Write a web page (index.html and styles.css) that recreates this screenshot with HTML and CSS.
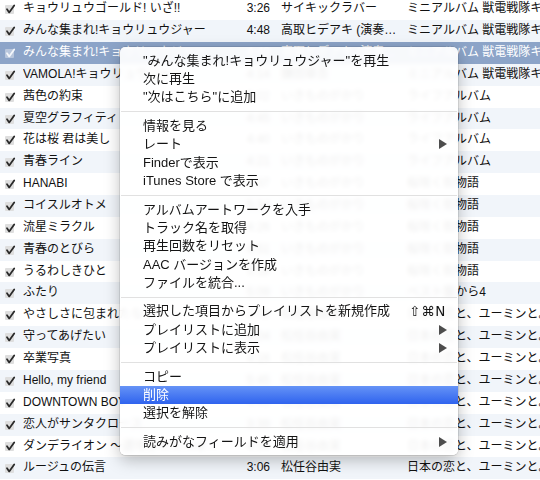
FILE: index.html
```html
<!DOCTYPE html>
<html lang="ja">
<head>
<meta charset="utf-8">
<link rel="stylesheet" href="styles.css">
</head>
<body>
<div class="list">
  <div class="row"><span class="chk"><svg viewBox="0 0 12 12"><rect x="1" y="2" width="9" height="9" rx="1" class="box"/><path d="M3 6.3 L5.2 9.4 L10.2 2.4" class="tick"/></svg></span><span class="title">キョウリュウゴールド! いざ!!</span><span class="time">3:26</span><span class="artist">サイキックラバー</span><span class="album">ミニアルバム 獣電戦隊キョウリュウジャー</span></div>
  <div class="row"><span class="chk"><svg viewBox="0 0 12 12"><rect x="1" y="2" width="9" height="9" rx="1" class="box"/><path d="M3 6.3 L5.2 9.4 L10.2 2.4" class="tick"/></svg></span><span class="title">みんな集まれ!キョウリュウジャー</span><span class="time">4:48</span><span class="artist">高取ヒデアキ (演奏: Project.R)</span><span class="album">ミニアルバム 獣電戦隊キョウリュウジャー</span></div>
  <div class="row sel"><span class="chk"><svg viewBox="0 0 12 12"><rect x="1" y="2" width="9" height="9" rx="1" class="box"/><path d="M3 6.3 L5.2 9.4 L10.2 2.4" class="tick"/></svg></span><span class="title">みんな集まれ!キョウリュウジャー</span><span class="time">4:49</span><span class="artist">高取ヒデアキ (演奏: Project.R)</span><span class="album">ミニアルバム 獣電戦隊キョウリュウジャー</span></div>
  <div class="row"><span class="chk"><svg viewBox="0 0 12 12"><rect x="1" y="2" width="9" height="9" rx="1" class="box"/><path d="M3 6.3 L5.2 9.4 L10.2 2.4" class="tick"/></svg></span><span class="title">VAMOLA!キョウリュウジャー</span><span class="time">4:14</span><span class="artist">鎌田章吾</span><span class="album">ミニアルバム 獣電戦隊キョウリュウジャー</span></div>
  <div class="row"><span class="chk"><svg viewBox="0 0 12 12"><rect x="1" y="2" width="9" height="9" rx="1" class="box"/><path d="M3 6.3 L5.2 9.4 L10.2 2.4" class="tick"/></svg></span><span class="title">茜色の約束</span><span class="time">5:02</span><span class="artist">いきものがかり</span><span class="album">ライフアルバム</span></div>
  <div class="row"><span class="chk"><svg viewBox="0 0 12 12"><rect x="1" y="2" width="9" height="9" rx="1" class="box"/><path d="M3 6.3 L5.2 9.4 L10.2 2.4" class="tick"/></svg></span><span class="title">夏空グラフィティ</span><span class="time">4:45</span><span class="artist">いきものがかり</span><span class="album">ライフアルバム</span></div>
  <div class="row"><span class="chk"><svg viewBox="0 0 12 12"><rect x="1" y="2" width="9" height="9" rx="1" class="box"/><path d="M3 6.3 L5.2 9.4 L10.2 2.4" class="tick"/></svg></span><span class="title">花は桜 君は美し</span><span class="time">4:40</span><span class="artist">いきものがかり</span><span class="album">ライフアルバム</span></div>
  <div class="row"><span class="chk"><svg viewBox="0 0 12 12"><rect x="1" y="2" width="9" height="9" rx="1" class="box"/><path d="M3 6.3 L5.2 9.4 L10.2 2.4" class="tick"/></svg></span><span class="title">青春ライン</span><span class="time">4:21</span><span class="artist">いきものがかり</span><span class="album">ライフアルバム</span></div>
  <div class="row"><span class="chk"><svg viewBox="0 0 12 12"><rect x="1" y="2" width="9" height="9" rx="1" class="box"/><path d="M3 6.3 L5.2 9.4 L10.2 2.4" class="tick"/></svg></span><span class="title">HANABI</span><span class="time">4:37</span><span class="artist">いきものがかり</span><span class="album">桜咲く街物語</span></div>
  <div class="row"><span class="chk"><svg viewBox="0 0 12 12"><rect x="1" y="2" width="9" height="9" rx="1" class="box"/><path d="M3 6.3 L5.2 9.4 L10.2 2.4" class="tick"/></svg></span><span class="title">コイスルオトメ</span><span class="time">5:34</span><span class="artist">いきものがかり</span><span class="album">桜咲く街物語</span></div>
  <div class="row"><span class="chk"><svg viewBox="0 0 12 12"><rect x="1" y="2" width="9" height="9" rx="1" class="box"/><path d="M3 6.3 L5.2 9.4 L10.2 2.4" class="tick"/></svg></span><span class="title">流星ミラクル</span><span class="time">4:26</span><span class="artist">いきものがかり</span><span class="album">桜咲く街物語</span></div>
  <div class="row"><span class="chk"><svg viewBox="0 0 12 12"><rect x="1" y="2" width="9" height="9" rx="1" class="box"/><path d="M3 6.3 L5.2 9.4 L10.2 2.4" class="tick"/></svg></span><span class="title">青春のとびら</span><span class="time">4:51</span><span class="artist">いきものがかり</span><span class="album">桜咲く街物語</span></div>
  <div class="row"><span class="chk"><svg viewBox="0 0 12 12"><rect x="1" y="2" width="9" height="9" rx="1" class="box"/><path d="M3 6.3 L5.2 9.4 L10.2 2.4" class="tick"/></svg></span><span class="title">うるわしきひと</span><span class="time">5:18</span><span class="artist">いきものがかり</span><span class="album">桜咲く街物語</span></div>
  <div class="row"><span class="chk"><svg viewBox="0 0 12 12"><rect x="1" y="2" width="9" height="9" rx="1" class="box"/><path d="M3 6.3 L5.2 9.4 L10.2 2.4" class="tick"/></svg></span><span class="title">ふたり</span><span class="time">5:09</span><span class="artist">いきものがかり</span><span class="album">ベスト盤から4</span></div>
  <div class="row"><span class="chk"><svg viewBox="0 0 12 12"><rect x="1" y="2" width="9" height="9" rx="1" class="box"/><path d="M3 6.3 L5.2 9.4 L10.2 2.4" class="tick"/></svg></span><span class="title">やさしさに包まれたなら</span><span class="time">3:02</span><span class="artist">松任谷由実</span><span class="album">日本の恋と、ユーミンと。</span></div>
  <div class="row"><span class="chk"><svg viewBox="0 0 12 12"><rect x="1" y="2" width="9" height="9" rx="1" class="box"/><path d="M3 6.3 L5.2 9.4 L10.2 2.4" class="tick"/></svg></span><span class="title">守ってあげたい</span><span class="time">4:04</span><span class="artist">松任谷由実</span><span class="album">日本の恋と、ユーミンと。</span></div>
  <div class="row"><span class="chk"><svg viewBox="0 0 12 12"><rect x="1" y="2" width="9" height="9" rx="1" class="box"/><path d="M3 6.3 L5.2 9.4 L10.2 2.4" class="tick"/></svg></span><span class="title">卒業写真</span><span class="time">4:16</span><span class="artist">松任谷由実</span><span class="album">日本の恋と、ユーミンと。</span></div>
  <div class="row"><span class="chk"><svg viewBox="0 0 12 12"><rect x="1" y="2" width="9" height="9" rx="1" class="box"/><path d="M3 6.3 L5.2 9.4 L10.2 2.4" class="tick"/></svg></span><span class="title">Hello, my friend</span><span class="time">5:45</span><span class="artist">松任谷由実</span><span class="album">日本の恋と、ユーミンと。</span></div>
  <div class="row"><span class="chk"><svg viewBox="0 0 12 12"><rect x="1" y="2" width="9" height="9" rx="1" class="box"/><path d="M3 6.3 L5.2 9.4 L10.2 2.4" class="tick"/></svg></span><span class="title">DOWNTOWN BOY</span><span class="time">4:43</span><span class="artist">松任谷由実</span><span class="album">日本の恋と、ユーミンと。</span></div>
  <div class="row"><span class="chk"><svg viewBox="0 0 12 12"><rect x="1" y="2" width="9" height="9" rx="1" class="box"/><path d="M3 6.3 L5.2 9.4 L10.2 2.4" class="tick"/></svg></span><span class="title">恋人がサンタクロース</span><span class="time">3:39</span><span class="artist">松任谷由実</span><span class="album">日本の恋と、ユーミンと。</span></div>
  <div class="row"><span class="chk"><svg viewBox="0 0 12 12"><rect x="1" y="2" width="9" height="9" rx="1" class="box"/><path d="M3 6.3 L5.2 9.4 L10.2 2.4" class="tick"/></svg></span><span class="title">ダンデライオン ～遅咲きのたんぽぽ～</span><span class="time">4:54</span><span class="artist">松任谷由実</span><span class="album">日本の恋と、ユーミンと。</span></div>
  <div class="row"><span class="chk"><svg viewBox="0 0 12 12"><rect x="1" y="2" width="9" height="9" rx="1" class="box"/><path d="M3 6.3 L5.2 9.4 L10.2 2.4" class="tick"/></svg></span><span class="title">ルージュの伝言</span><span class="time">3:06</span><span class="artist">松任谷由実</span><span class="album">日本の恋と、ユーミンと。</span></div>
</div>

<div class="menu">
  <div class="group">
    <div class="item"><span class="label">"みんな集まれ!キョウリュウジャー"を再生</span></div>
    <div class="item"><span class="label">次に再生</span></div>
    <div class="item"><span class="label">"次はこちら"に追加</span></div>
  </div>
  <div class="sep"></div>
  <div class="group">
    <div class="item"><span class="label">情報を見る</span></div>
    <div class="item"><span class="label">レート</span><span class="arrow"></span></div>
    <div class="item"><span class="label">Finderで表示</span></div>
    <div class="item"><span class="label">iTunes Store で表示</span></div>
  </div>
  <div class="sep"></div>
  <div class="group">
    <div class="item"><span class="label">アルバムアートワークを入手</span></div>
    <div class="item"><span class="label">トラック名を取得</span></div>
    <div class="item"><span class="label">再生回数をリセット</span></div>
    <div class="item"><span class="label">AAC バージョンを作成</span></div>
    <div class="item"><span class="label">ファイルを統合...</span></div>
  </div>
  <div class="sep"></div>
  <div class="group">
    <div class="item"><span class="label">選択した項目からプレイリストを新規作成</span><span class="key">⇧⌘N</span></div>
    <div class="item"><span class="label">プレイリストに追加</span><span class="arrow"></span></div>
    <div class="item"><span class="label">プレイリストに表示</span><span class="arrow"></span></div>
  </div>
  <div class="sep"></div>
  <div class="group">
    <div class="item"><span class="label">コピー</span></div>
    <div class="item hi"><span class="label">削除</span></div>
    <div class="item"><span class="label">選択を解除</span></div>
  </div>
  <div class="sep"></div>
  <div class="group">
    <div class="item"><span class="label">読みがなフィールドを適用</span><span class="arrow"></span></div>
  </div>
</div>
</body>
</html>
```

FILE: styles.css
```css
html, body {
  margin: 0;
  padding: 0;
}
body {
  width: 540px;
  height: 480px;
  overflow: hidden;
  position: relative;
  background: #ffffff;
  font-family: "Liberation Sans", "Noto Sans CJK JP", sans-serif;
  color: #111111;
}

.list {
  display: flex;
  flex-direction: column;
  margin-top: -1.7px;
}
.row {
  display: grid;
  grid-template-columns: 23px 201px 47px 127px 1fr;
  align-items: center;
  height: 21.86px;
  font-size: 12px;
  line-height: 21.86px;
  white-space: nowrap;
  background: #ffffff;
}
.row:nth-child(even) {
  background: #f1f5fa;
}
.row.sel {
  background: #8ca4c8;
  color: #ffffff;
}
.chk {
  display: flex;
  align-items: center;
  padding-left: 4px;
  height: 100%;
}
.chk svg {
  width: 12px;
  height: 12px;
  display: block;
}
.box { fill: #dedede; }
.tick {
  fill: none;
  stroke: #2a2a2a;
  stroke-width: 1.8;
  stroke-linecap: round;
  stroke-linejoin: round;
}
.sel .box { fill: #b8c6dc; }
.sel .tick { stroke: #f4f7fb; }

.title, .artist, .album {
  overflow: hidden;
}
.title, .artist {
  text-overflow: ellipsis;
}
.time {
  text-align: right;
  padding-right: 1px;
}
.artist {
  padding-left: 10px;
}
.album {
  padding-left: 9px;
  text-overflow: clip;
}

.menu {
  position: absolute;
  left: 120px;
  top: 46.7px;
  width: 338px;
  padding: 5px 0 4px;
  box-sizing: border-box;
  border-radius: 5px;
  background: rgba(255, 255, 255, 0.93);
  backdrop-filter: blur(2px);
  box-shadow: 0 0 0 0.5px rgba(0, 0, 0, 0.18), 0 5px 16px rgba(0, 0, 0, 0.26);
  font-size: 13px;
  color: #141414;
  display: flex;
  flex-direction: column;
}
.group {
  display: flex;
  flex-direction: column;
}
.item {
  height: 18.33px;
  line-height: 18.33px;
  display: flex;
  align-items: center;
  justify-content: space-between;
  padding: 0 11px 0 23px;
  white-space: nowrap;
}
.item.hi {
  background: linear-gradient(#6593f6, #2f63ee);
  color: #ffffff;
}
.sep {
  height: 1px;
  background: #e1e1e1;
  margin: 4.65px 1px;
}
.key {
  font-family: "DejaVu Sans", sans-serif;
  font-size: 13.5px;
  letter-spacing: 0.6px;
  padding-right: 1px;
}
.arrow {
  width: 0;
  height: 0;
  border-top: 5px solid transparent;
  border-bottom: 5px solid transparent;
  border-left: 8px solid #4d4d4d;
}
```
